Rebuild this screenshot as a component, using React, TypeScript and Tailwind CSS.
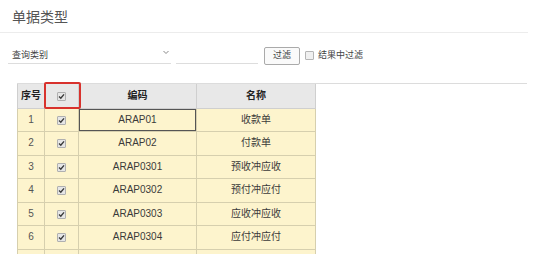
import React from 'react';

type Row = {
  no: number;
  code: string;
  name: string;
};

const rows: Row[] = [
  { no: 1, code: 'ARAP01', name: '收款单' },
  { no: 2, code: 'ARAP02', name: '付款单' },
  { no: 3, code: 'ARAP0301', name: '预收冲应收' },
  { no: 4, code: 'ARAP0302', name: '预付冲应付' },
  { no: 5, code: 'ARAP0303', name: '应收冲应收' },
  { no: 6, code: 'ARAP0304', name: '应付冲应付' },
];

function Check({ checked = true }: { checked?: boolean }) {
  return (
    <span className="inline-flex h-[9px] w-[9px] items-center justify-center rounded-[1px] border border-[#b0b0b0] bg-[#e6e6e6] align-middle">
      {checked && (
        <svg width="7" height="7" viewBox="0 0 7 7">
          <path d="M1 3.6 L2.8 5.3 L6 1.4" fill="none" stroke="#3a3a3a" strokeWidth="1.4" />
        </svg>
      )}
    </span>
  );
}

export default function App() {
  return (
    <div
      className="relative h-[254px] w-[554px] overflow-hidden bg-white text-[#3a3a3a]"
      style={{ fontFamily: '"Liberation Sans", "Noto Sans CJK SC", sans-serif' }}
    >
      <div className="h-[33px] w-[528px] border-b border-[#ececec] pl-[12px] pt-[8px] text-[14px] leading-[18px] text-[#555]">
        单据类型
      </div>

      <div className="flex h-[31px] items-end">
        <div className="relative ml-[8px] h-[17px] w-[163px] border-b border-[#ddd]">
          <span className="absolute left-[4px] top-[2px] text-[9px] leading-[12px] text-[#444]">查询类别</span>
          <svg className="absolute left-[155px] top-[3px]" width="6" height="5" viewBox="0 0 6 5">
            <path d="M0.5 1 L3 3.5 L5.5 1" fill="none" stroke="#888" strokeWidth="1" />
          </svg>
        </div>
        <div className="ml-[5px] h-[17px] w-[82px] border-b border-[#ddd]" />
        <button className="mb-[-1px] ml-[6px] flex h-[18px] w-[36px] items-center justify-center rounded-[2px] border border-[#aaa] bg-[#fafafa] text-[9px] text-[#444]">
          过滤
        </button>
        <div className="mb-[4px] ml-[5px] flex items-center gap-[4px]">
          <span className="inline-block h-[9px] w-[9px] rounded-[1px] border border-[#b5b5b5] bg-[#f0f0f0]" />
          <span className="text-[9px] leading-[10px] text-[#444]">结果中过滤</span>
        </div>
      </div>

      <div className="ml-[17px] mt-[19px] w-[510px] border-t border-[#dcdcdc]">
        <table className="border-collapse text-[10px] leading-[12px]">
          <thead>
            <tr className="h-[24px] bg-[#e8e8e8]">
              <th className="w-[27px] border border-t-0 border-[#cfcfcf] font-bold text-[#222]">序号</th>
              <th className="w-[34px] border border-t-0 border-[#cfcfcf]">
                <Check />
              </th>
              <th className="w-[118px] border border-t-0 border-[#cfcfcf] font-bold text-[#222]">编码</th>
              <th className="w-[119px] border border-t-0 border-[#cfcfcf] font-bold text-[#222]">名称</th>
            </tr>
          </thead>
          <tbody>
            {rows.map((r, i) => (
              <tr key={r.no} className="h-[23.5px] bg-[#fdf4cd]">
                <td className="border border-[#d6cfae] text-center text-[#555]">{r.no}</td>
                <td className="border border-[#d6cfae] text-center">
                  <Check />
                </td>
                <td
                  className={
                    i === 0
                      ? 'border border-[#d6cfae] text-center shadow-[inset_0_0_0_1px_#555]'
                      : 'border border-[#d6cfae] text-center'
                  }
                >
                  {r.code}
                </td>
                <td className="border border-[#d6cfae] text-center">{r.name}</td>
              </tr>
            ))}
            <tr className="h-[23.5px] bg-[#fdf4cd]">
              <td className="border border-[#d6cfae]" />
              <td className="border border-[#d6cfae]" />
              <td className="border border-[#d6cfae]" />
              <td className="border border-[#d6cfae]" />
            </tr>
          </tbody>
        </table>
      </div>

      <div className="absolute left-[44px] top-[82px] h-[27px] w-[37px] rounded-[2px] border-2 border-[#d8322d]" />
    </div>
  );
}
